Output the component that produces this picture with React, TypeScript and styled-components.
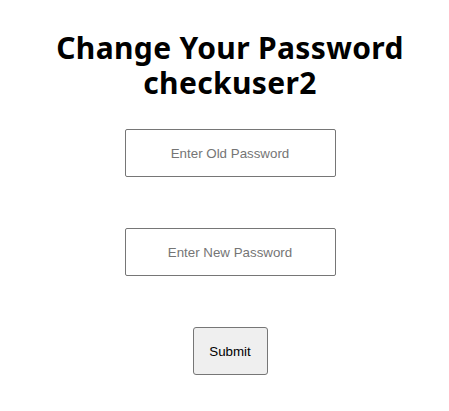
import React from "react";
import styled, { createGlobalStyle } from "styled-components";

const Global = createGlobalStyle`
  html, body { margin: 0; padding: 0; background: #fff; }
  body { font-family: "Liberation Sans", Arial, sans-serif; }
`;

const Page = styled.div`
  display: flex;
  flex-direction: column;
  align-items: center;
  padding: 30px 0 0 11px;
`;

const Title = styled.h1`
  margin: 0 0 29px;
  font-family: "Noto Sans", "Open Sans", sans-serif;
  font-weight: 700;
  font-size: 30px;
  line-height: 35px;
  letter-spacing: 0.35px;
  text-align: center;
  color: #000;
`;

const Form = styled.form`
  display: flex;
  flex-direction: column;
  align-items: center;
  gap: 51px;
`;

const Field = styled.input`
  box-sizing: border-box;
  width: 211px;
  height: 48px;
  border: 1px solid #767676;
  border-radius: 2px;
  text-align: center;
  font-family: "Liberation Sans", Arial, sans-serif;
  font-size: 13.33px;
  color: #000;
  background: #fff;
  outline: none;
  &::placeholder { color: #757575; }
`;

const Button = styled.button`
  box-sizing: border-box;
  width: 75px;
  height: 48px;
  border: 1px solid #767676;
  border-radius: 3px;
  background: #efefef;
  font-family: "Liberation Sans", Arial, sans-serif;
  font-size: 13.33px;
  color: #000;
`;

export default function App() {
  return (
    <>
      <Global />
      <Page>
        <Title>
          Change Your Password
          <br />
          checkuser2
        </Title>
        <Form onSubmit={(e) => e.preventDefault()}>
          <Field type="password" placeholder="Enter Old Password" />
          <Field type="password" placeholder="Enter New Password" />
          <Button type="submit">Submit</Button>
        </Form>
      </Page>
    </>
  );
}
